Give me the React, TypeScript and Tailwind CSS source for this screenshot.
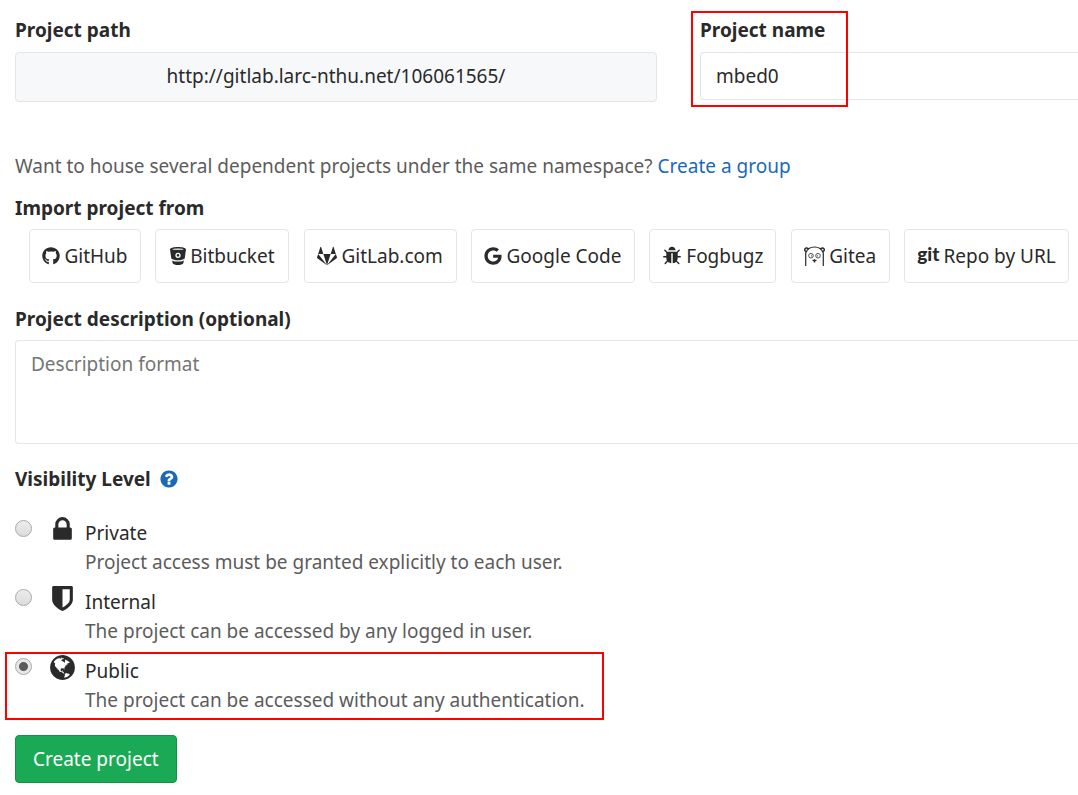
import { ReactNode, useState } from "react";
import { FaGithub, FaGoogle } from "react-icons/fa";

function Glyph({ d, className }: { d: string; className: string }) {
  return (
    <svg viewBox="0 0 1792 1792" fill="currentColor" aria-hidden="true" className={className}>
      <path d={d} />
    </svg>
  );
}

const gitlabPath =
  "M104 706l792 1015-868-630q-18-13-25-34.5t0-42.5zm462 0h660l-330 1015zm-198-615l198 615h-462l198-615q8-23 33-23t33 23zm1320 615l101 308q7 21 0 42.5t-25 34.5l-868 630 792-1015zm0 0h-462l198-615q8-23 33-23t33 23z";
const bugPath =
  "M1696 960q0 26-19 45t-45 19h-224q0 171-67 290l208 209q19 19 19 45t-19 45q-18 19-45 19t-45-19l-198-197q-5 5-15 13t-42 28.5-65 36.5-82 29-97 13v-896h-128v896q-51 0-101.5-13.5t-87-33-66-39-43.5-32.5l-15-14-183 207q-20 21-48 21-24 0-43-16-19-18-20.5-44.5t15.5-46.5l202-227q-58-114-58-274h-224q-26 0-45-19t-19-45 19-45 45-19h224v-294l-173-173q-19-19-19-45t19-45 45-19 45 19l173 173h844l173-173q19-19 45-19t45 19 19 45-19 45l-173 173v294h224q26 0 45 19t19 45zm-480-576h-640q0-133 93.5-226.5t226.5-93.5 226.5 93.5 93.5 226.5z";
const lockPath =
  "M640 768h512v-192q0-106-75-181t-181-75-181 75-75 181v192zm832 96v576q0 40-28 68t-68 28h-960q-40 0-68-28t-28-68v-576q0-40 28-68t68-28h32v-192q0-184 132-316t316-132 316 132 132 316v192h32q40 0 68 28t28 68z";
const shieldPath =
  "M1344 960v-640h-448v1137q119-63 213-137 235-184 235-360zm192-768v768q0 86-33.5 170.5t-83 150-118 127.5-126.5 103-121 77.5-89.5 49.5-42.5 20q-12 6-26 6t-26-6q-16-7-42.5-20t-89.5-49.5-121-77.5-126.5-103-118-127.5-83-150-33.5-170.5v-768q0-26 19-45t45-19h1152q26 0 45 19t19 45z";
const globePath =
  "M896 128q209 0 385.5 103t279.5 279.5 103 385.5-103 385.5-279.5 279.5-385.5 103-385.5-103-279.5-279.5-103-385.5 103-385.5 279.5-279.5 385.5-103zm274 521q-2 1-9.5 9.5t-13.5 9.5q2 0 4.5-5t5-11 3.5-7q6-7 22-15 14-6 52-12 34-8 51 11-2-2 9.5-13t14.5-12q3-2 15-4.5t15-7.5l2-22q-12 1-17.5-7t-6.5-21q0 2-6 8 0-7-4.5-8t-11.5 1-9 1q-10-3-15-7.5t-8-16.5-4-15q-2-5-9.5-10.5t-9.5-10.5q-1-2-2.5-5.5t-3-6.5-4-5.5-5.5-2.5-7 5-7.5 10-4.5 5q-3-2-6-1.5t-4.5 1-4.5 3-5 3.5q-3 2-8.5 3t-8.5 2q15-5-1-11-10-4-16-3 9-4 7.5-12t-8.5-14h5q-1-4-8.5-8.5t-17.5-8.5-13-6q-8-5-34-9.5t-33-.5q-5 6-4.5 10.5t4 14 3.5 12.5q1 6-5.5 13t-6.5 12q0 7 14 15.5t10 21.5q-3 8-16 16t-16 12q-5 8-1.5 18.5t10.5 16.5q2 2 1.5 4t-3.5 4.5-5.5 4-6.5 3.5l-3 2q-11 5-20.5-6t-13.5-26q-7-25-16-30-23-8-29 1-5-13-41-26-25-9-58-4 6-1 0-15-7-15-19-12 3-6 4-17.5t1-13.5q3-13 12-23 1-1 7-8.5t9.5-13.5.5-6q35 4 50-11 5-5 11.5-17t10.5-17q9-6 14-5.5t14.5 5.5 14.5 5q14 1 15.5-11t-7.5-20q12 1 3-17-4-7-8-9-12-4-27 5-8 4 2 8-1-1-9.5 10.5t-16.5 17.5-16-5q-1-1-5.5-13.5t-9.5-13.5q-8 0-16 15 3-8-11-15t-24-8q19-12-8-27-7-4-20.5-5t-19.5 4q-5 7-5.5 11.5t5 8 10.5 5.5 11.5 4 8.5 3q14 10 8 14-2 1-8.5 3.5t-11.5 4.5-6 4q-3 4 0 14t-2 14q-5-5-9-17.5t-7-16.5q7 9-25 6l-10-1q-4 0-16 2t-20.5 1-13.5-8q-4-8 0-20 1-4 4-2-4-3-11-9.5t-10-8.5q-46 15-94 41 6 1 12-1 5-2 13-6.5t10-5.5q34-14 42-7l5-5q14 16 20 25-7-4-30-1-20 6-22 12 7 12 5 18-4-3-11.5-10t-14.5-11-15-5q-16 0-22 1-146 80-235 222 7 7 12 8 4 1 5 9t2.5 11 11.5-3q9 8 3 19 1-1 44 27 19 17 21 21 3 11-10 18-1-2-9-9t-9-4q-3 5 .5 18.5t10.5 12.5q-7 0-9.5 16t-2.5 35.5-1 23.5l2 1q-3 12 5.5 34.5t21.5 19.5q-13 3 20 43 6 8 8 9 3 2 12 7.5t15 10 10 10.5q4 5 10 22.5t14 23.5q-2 6 9.5 20t10.5 23q-1 0-2.5 1t-2.5 1q3 7 15.5 14t15.5 13q1 3 2 10t3 11 8 2q2-20-24-62-15-25-17-29-3-5-5.5-15.5t-4.5-14.5q2 0 6 1.5t8.5 3.5 7.5 4 2 3q-3 7 2 17.500t12 18.500 17 19 12 13q6 6 14 19.500t0 13.500q9 0 20 10.500t17 19.500q5 8 8 26t5 24q2 7 8.500 13.500t12.500 9.500l16 8 13 7q5 2 18.500 10.500t21.500 11.500q10 4 16 4t14.500-2.500 13.500-3.500q15-2 29 15t21 21q36 19 55 11-2 1 .5 7.500t8 15.500 9 14.500 5.500 8.500q5 6 18 15t18 15q6-4 7-9-3 8 7 20t18 10q14-3 14-32-31 15-49-18 0-1-2.500-5.500t-4-8.500-2.500-8.500 0-7.500 5-3q9 0 10-3.500t-2-12.500-4-13q-1-8-11-20t-12-15q-5 9-16 8t-16-9q0 1-1.500 5.500t-1.500 6.500q-13 0-15-1 1-3 2.500-17.500t3.500-22.500q1-4 5.500-12t7.500-14.500 4-12.500-4.500-9.500-17.500-2.500q-19 1-26 20-1 3-3 10.500t-5 11.500-9 7q-7 3-24 2t-24-5q-13-8-22.500-29t-9.500-37q0-10 2.500-26.500t3-25-5.500-24.500q3-2 9-9.500t10-10.500q2-1 4.500-1.500t4.500 0 4-1.500 3-6q-1-1-4-3-3-3-4-3 7 3 28.500-1.500t27.500 1.500q15 11 22-2 0-1-2.500-9.500t-.5-13.500q5 27 29 9 3 3 15.500 5t17.500 5q3 2 7 5.500t5.500 4.500 5-.5 8.500-6.500q10 14 12 24 11 40 19 44 7 3 11 2t4.500-9.500 0-14-1.500-12.500l-1-8v-18l-1-8q-15-3-18.500-12t1.500-18.500 15-18.500q1-1 8-3.500t15.500-6.500 12.500-8q21-19 15-35 7 0 11-9-1 0-5-3t-7.500-5-4.500-2q9-5 2-16 5-3 7.500-11t7.500-10q9 12 21 2 8-8 1-16 5-7 20.500-10.500t18.500-9.500q7 2 8-2t1-12 3-12q4-5 15-9t13-5l17-11q3-4 0-4 18 2 31-11 10-11-6-20 3-6-3-9.500t-15-5.500q3-1 11.500-.5t10.500-1.500q15-10-7-16-17-5-43 12zm-163 877q206-36 351-189-3-3-12.500-4.500t-12.500-3.500q-18-7-24-8 1-7-2.500-13t-8-9-12.500-8-11-7q-2-2-7-6t-7-5.500-7.500-4.500-8.500-2-10 1l-3 1q-3 1-5.500 2.500t-5.500 3-4 3 0 2.500q-21-17-36-22-5-1-11-5.500t-10.500-7-10-1.500-11.500 7q-5 5-6 15t-2 13q-7-5 0-17.500t2-18.500q-3-6-10.500-4.500t-12 4.500-11.500 8.500-9 6.500-8.500 5.500-8.500 7.500q-3 4-6 12t-5 11q-2-4-11.500-6.500t-9.500-5.500q2 10 4 35t5 38q7 31-12 48-27 25-29 40-4 22 12 26 0 7-8 20.500t-7 21.500q0 6 2 16z";
const questionPath =
  "M1024 1376v-192q0-14-9-23t-23-9h-192q-14 0-23 9t-9 23v192q0 14 9 23t23 9h192q14 0 23-9t9-23zm256-672q0-88-55.5-163t-138.5-116-170-41q-243 0-371 213-15 24 8 42l132 100q7 6 19 6 16 0 25-12 53-68 86-92 34-24 86-24 48 0 85.5 26t37.5 59q0 38-20 61t-68 45q-63 28-115.5 86.5t-52.5 125.5v36q0 14 9 23t23 9h192q14 0 23-9t9-23q0-19 21.5-49.5t54.5-49.5q32-18 49-28.5t46-35 44.5-48 28-60.5 12.5-81zm384 192q0 209-103 385.5t-279.5 279.5-385.5 103-385.5-103-279.5-279.5-103-385.5 103-385.5 279.5-279.5 385.5-103 385.5 103 279.5 279.5 103 385.5z";

function BucketIcon() {
  return (
    <svg viewBox="0 0 16 18" aria-hidden="true" className="h-[18px] w-4 shrink-0">
      <path
        fill="currentColor"
        d="M0 2.400C0 .9 3.600 0 8 0s8 .9 8 2.400l-1.300 9c-1.300 1.200-3.800 1.800-6.700 1.800s-5.400-.6-6.700-1.800zM2.100 13.400c1.600.8 3.600 1.200 5.900 1.200s4.300-.4 5.900-1.200l-.6 2.800C12.700 17.400 10.500 18 8 18s-4.700-.6-5.300-1.800z"
      />
      <ellipse cx="8" cy="2.200" rx="5.600" ry="0.600" fill="#fff" />
      <circle cx="8" cy="8.300" r="2" fill="none" stroke="#fff" strokeWidth="1.300" />
    </svg>
  );
}

function GiteaIcon() {
  return (
    <svg
      viewBox="0 0 21 20"
      fill="none"
      stroke="currentColor"
      strokeWidth="1.200"
      aria-hidden="true"
      className="h-5 w-[21px] shrink-0"
    >
      <path d="M1.700 20V7C3 3.300 6.400 1 10.500 1s7.500 2.300 8.800 6v13" />
      <path
        d="M2.400 5.600C.8 5.200.4 3.800 1 2.900c.8-1.200 2.800-1.100 3.600.3M18.600 5.600c1.600-.4 2-1.800 1.400-2.700-.8-1.200-2.800-1.100-3.600.3"
        strokeWidth="1.500"
      />
      <circle cx="7" cy="9.700" r="2.300" strokeWidth="0.800" />
      <circle cx="14" cy="9.700" r="2.300" strokeWidth="0.800" />
      <circle cx="7.600" cy="9.800" r="0.600" fill="currentColor" stroke="none" />
      <circle cx="13.400" cy="9.800" r="0.600" fill="currentColor" stroke="none" />
      <path d="M8.500 13.800h1.200l.8-.9.800.9h1.200v1.300h-1.200v1.400H9.700v-1.400H8.500z" fill="currentColor" stroke="none" />
    </svg>
  );
}

const sources: { name: string; width: string; icon: ReactNode }[] = [
  { name: "GitHub", width: "w-28", icon: <FaGithub aria-hidden="true" className="size-[18px] shrink-0" /> },
  { name: "Bitbucket", width: "w-[134px]", icon: <BucketIcon /> },
  { name: "GitLab.com", width: "w-[153px]", icon: <Glyph d={gitlabPath} className="size-5 shrink-0" /> },
  { name: "Google Code", width: "w-[164px]", icon: <FaGoogle aria-hidden="true" className="size-[18px] shrink-0" /> },
  { name: "Fogbugz", width: "w-[127px]", icon: <Glyph d={bugPath} className="size-5 shrink-0" /> },
  { name: "Gitea", width: "w-[99px]", icon: <GiteaIcon /> },
  {
    name: "Repo by URL",
    width: "w-[165px]",
    icon: (
      <span aria-hidden="true" className="pb-1 font-['Lato',sans-serif] text-[19px] leading-5 font-black">
        git
      </span>
    ),
  },
];

const levels = [
  {
    id: "private",
    title: "Private",
    text: "Project access must be granted explicitly to each user.",
    icon: lockPath,
  },
  {
    id: "internal",
    title: "Internal",
    text: "The project can be accessed by any logged in user.",
    icon: shieldPath,
  },
  {
    id: "public",
    title: "Public",
    text: "The project can be accessed without any authentication.",
    icon: globePath,
  },
];

export default function App() {
  const [name, setName] = useState("mbed0");
  const [level, setLevel] = useState("public");

  return (
    <form
      onSubmit={(e) => e.preventDefault()}
      className="overflow-hidden bg-white pt-4 pb-3 pl-[15px] font-['Noto_Sans',sans-serif] text-[19px] leading-7 text-[#2a2a2a]"
    >
      <div className="grid grid-cols-[642fr_378fr] gap-[43px]">
        <div>
          <div className="mb-2 font-bold">Project path</div>
          <div className="flex h-[50px] items-center justify-center rounded border border-[#e5e5e5] bg-[#f7f8fa] pb-0.5">
            http://gitlab.larc-nthu.net/106061565/
          </div>
        </div>
        <div className="relative">
          <label htmlFor="name" className="mb-2 block font-bold">
            Project name
          </label>
          <input
            id="name"
            value={name}
            onChange={(e) => setName(e.target.value)}
            className="block h-12 w-full rounded-l border border-r-0 border-[#e5e5e5] px-[15px] outline-none"
          />
          <div className="pointer-events-none absolute -top-[5px] -left-[9px] h-24 w-[157px] border-2 border-[#f00]" />
        </div>
      </div>

      <p className="mt-[50px] text-[#5c5c5c]">
        Want to house several dependent projects under the same namespace?{" "}
        <a href="#group" className="text-[#1b69b6]">
          Create a group
        </a>
      </p>

      <h2 className="mt-[14px] font-bold">Import project from</h2>
      <div className="mt-[7px] flex flex-wrap justify-between gap-y-2 pr-[9px] pl-[14px]">
        {sources.map((s) => (
          <button
            key={s.name}
            type="button"
            className={`flex h-[54px] items-center justify-center gap-1 rounded border border-[#e5e5e5] bg-white whitespace-nowrap ${s.width}`}
          >
            {s.icon}
            <span>{s.name}</span>
          </button>
        ))}
      </div>

      <label htmlFor="description" className="mt-[22px] block font-bold">
        Project description (optional)
      </label>
      <textarea
        id="description"
        placeholder="Description format"
        className="mt-[7px] block h-[104px] w-full resize-none rounded-l border border-r-0 border-[#e5e5e5] px-[15px] py-[9px] outline-none placeholder:text-[#757575]"
      />

      <fieldset>
        <legend className="flex items-center gap-2 pt-[21px] font-bold">
          Visibility Level
          <a href="#help" aria-label="Help" className="text-[#1b69b6]">
            <Glyph d={questionPath} className="size-5" />
          </a>
        </legend>
        <div className="flex flex-col gap-[11px] pt-[26px] leading-[29px]">
          {levels.map((l) => (
            <div key={l.id} className="relative flex items-start">
              <input
                type="radio"
                name="visibility"
                id={l.id}
                checked={level === l.id}
                onChange={() => setLevel(l.id)}
                className="mt-px size-[17px] shrink-0 appearance-none rounded-full border border-[#a9a9a9] bg-linear-to-b from-[#ececec] to-[#dcdcdc] checked:bg-[radial-gradient(circle,#5a5a5a_4px,#e6e6e6_5px)]"
              />
              <label htmlFor={l.id} className="flex items-start">
                <Glyph d={l.icon} className="-mt-1 ml-4 size-[29px] shrink-0" />
                <span className="ml-2">
                  <span className="block">{l.title}</span>
                  <span className="block text-[#5c5c5c]">{l.text}</span>
                </span>
              </label>
              {l.id === "public" && (
                <div className="pointer-events-none absolute -top-[5px] -left-[10px] h-[68px] w-[599px] border-2 border-[#f00]" />
              )}
            </div>
          ))}
        </div>
      </fieldset>

      <button
        type="submit"
        className="mt-5 h-12 rounded border border-[#168f48] bg-[#1aaa55] px-[17px] whitespace-nowrap text-white"
      >
        Create project
      </button>
    </form>
  );
}
